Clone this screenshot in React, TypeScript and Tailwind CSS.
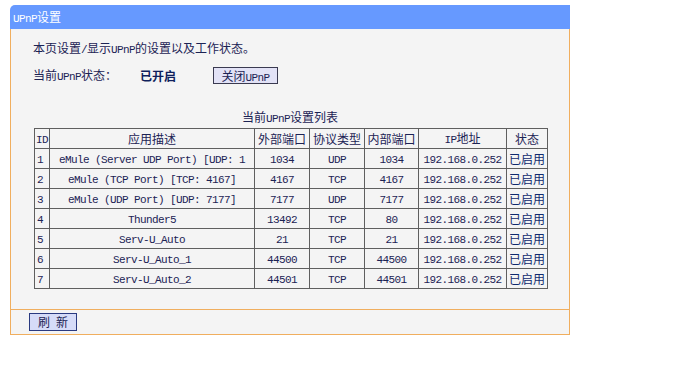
import React from "react";

function T({ s }: { s: string }) {
  const parts = s.split(/([\x20-\x7E]+)/).filter((p) => p.length > 0);
  return (
    <>
      {parts.map((p, i) =>
        /^[\x20-\x7E]+$/.test(p) ? (
          <span
            key={i}
            className="whitespace-pre font-[family-name:'Liberation_Mono',monospace] text-[11px] tracking-[-0.6px]"
          >
            {p}
          </span>
        ) : (
          <span key={i} className="font-[family-name:'Noto_Sans_CJK_SC',sans-serif] text-[12px]">
            {p}
          </span>
        )
      )}
    </>
  );
}

const rows = [
  ["1", "eMule (Server UDP Port) [UDP: 1", "1034", "UDP", "1034"],
  ["2", "eMule (TCP Port) [TCP: 4167]", "4167", "TCP", "4167"],
  ["3", "eMule (UDP Port) [UDP: 7177]", "7177", "UDP", "7177"],
  ["4", "Thunder5", "13492", "TCP", "80"],
  ["5", "Serv-U_Auto", "21", "TCP", "21"],
  ["6", "Serv-U_Auto_1", "44500", "TCP", "44500"],
  ["7", "Serv-U_Auto_2", "44501", "TCP", "44501"],
];

const cell = "border border-[#5f5f5f] p-0 text-center whitespace-nowrap overflow-hidden";

export default function App() {
  return (
    <div className="w-[680px] h-[384px] bg-white text-[#1c2354] text-[12px] leading-[16px] font-[family-name:'Noto_Sans_CJK_SC',sans-serif]">
      <div className="pt-[5px] pl-[10px]">
        <div className="w-[560px]">
          <div className="h-[24px] bg-[#6699ff] rounded-tl-[5px] pl-[3px] leading-[24px] text-white">
            <T s="UPnP设置" />
          </div>
          <div className="border-l border-r border-[#f0ae5e] bg-[#f4f4f4] pt-[11px] pl-[22px] pb-[20px]">
            <div className="h-[16px]">
              <T s="本页设置/显示UPnP的设置以及工作状态。" />
            </div>
            <div className="mt-[11px] flex items-center h-[17px]">
              <span className="w-[107px]">
                <T s="当前UPnP状态：" />
              </span>
              <span className="w-[73px] font-bold text-[#0f1f5c]">已开启</span>
              <button className="w-[65px] h-[17px] bg-[#e2e2f6] border border-[#3a3a50] leading-[15px] text-[#1c2354]">
                <T s="关闭UPnP" />
              </button>
            </div>
            <div className="mt-[25px] h-[16px] w-[514px] text-center">
              <T s="当前UPnP设置列表" />
            </div>
            <table className="mt-[3px] ml-[1px] w-[513px] table-fixed border-collapse border border-[#5f5f5f]">
              <colgroup>
                <col className="w-[15px]" />
                <col className="w-[205px]" />
                <col className="w-[55px]" />
                <col className="w-[55px]" />
                <col className="w-[54px]" />
                <col className="w-[88px]" />
                <col className="w-[41px]" />
              </colgroup>
              <thead>
                <tr className="h-[20px]">
                  <td className={cell}><T s="ID" /></td>
                  <td className={cell}><T s="应用描述" /></td>
                  <td className={cell}><T s="外部端口" /></td>
                  <td className={cell}><T s="协议类型" /></td>
                  <td className={cell}><T s="内部端口" /></td>
                  <td className={cell}><T s="IP地址" /></td>
                  <td className={cell}><T s="状态" /></td>
                </tr>
              </thead>
              <tbody>
                {rows.map((r) => (
                  <tr key={r[0]} className="h-[20px]">
                    <td className="border border-[#5f5f5f] p-0 pl-[2px] text-left"><T s={r[0]} /></td>
                    <td className={cell}><T s={r[1]} /></td>
                    <td className={cell}><T s={r[2]} /></td>
                    <td className={cell}><T s={r[3]} /></td>
                    <td className={cell}><T s={r[4]} /></td>
                    <td className={cell}><T s="192.168.0.252" /></td>
                    <td className={`${cell} text-[#0f2a6e]`}><T s="已启用" /></td>
                  </tr>
                ))}
              </tbody>
            </table>
          </div>
          <div className="border border-[#f0ae5e] bg-[#f4f4f4] pt-[3px] pb-[3px] pl-[18px]">
            <button className="block w-[48px] h-[18px] bg-[#d6dcf8] border border-[#2a3a80] leading-[16px] text-[#1c2354]">
              <T s="刷 新" />
            </button>
          </div>
        </div>
      </div>
    </div>
  );
}
